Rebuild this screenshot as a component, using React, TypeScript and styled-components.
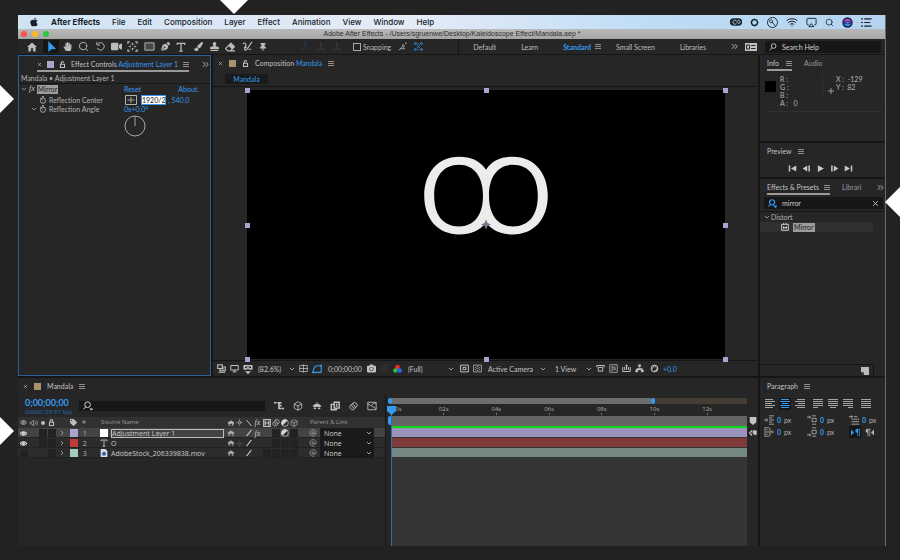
import React from "react";
import styled, { createGlobalStyle, css } from "styled-components";
import {
  FaApple,
  FaCamera,
  FaEraser,
  FaHandPaper,
  FaPaintBrush,
  FaPenNib,
  FaStamp,
  FaTag,
  FaThumbtack,
  FaVideo,
} from "react-icons/fa";
import { Airplay, Box, Search, Wifi } from "lucide-react";

const blue = "#359af0";
const panel = "#262626";
const line = "#161616";
const text = "#b2b2b2";
const ui = '"Lato", "Open Sans", sans-serif';
const wide = '"Open Sans", "Noto Sans", sans-serif';

const Global = createGlobalStyle`
  *, *::before, *::after { box-sizing: border-box; }
  body { margin: 0; background: #222222; }
  button, input, select { font: inherit; color: inherit; margin: 0; padding: 0; border: 0; background: none; outline: 0; }
  svg { display: block; flex: none; }
`;

/* ---------- icons ---------- */

type GlyphProps = { d: string; size?: number; fill?: string; sw?: number; color?: string };

const Glyph = ({ d, size = 10, fill = "none", sw = 1, color = "currentColor" }: GlyphProps) => (
  <svg width={size} height={size} viewBox="0 0 12 12" fill={fill} stroke={color} strokeWidth={sw} aria-hidden="true">
    <path d={d} />
  </svg>
);

const Solid = ({ d, size = 10, color = "currentColor" }: GlyphProps) => (
  <svg width={size} height={size} viewBox="0 0 12 12" fill={color} fillRule="evenodd" aria-hidden="true">
    <path d={d} />
  </svg>
);

const shapes = {
  chevron: "M2 4l4 4 4-4",
  chevronRight: "M4 2l4 4-4 4",
  double: "M1.5 2l4 4-4 4M6.5 2l4 4-4 4",
  cross: "M2 2l8 8M10 2l-8 8",
  home: "M6 0.5L0 6h1.7v5.5h3V7.5h2.6v4h3V6H12z",
  cursor: "M2.5 0l8.5 8.8-5 0.2-3.5 3z",
  rotate: "M2.4 7.5a4 4 0 1 0 0.4-4M2 1v3.4h3.4",
  pan: "M1 3V1h2M9 1h2v2M11 9v2H9M3 11H1V9M6 2v2M6 8v2M2 6h2M8 6h2M6 6h0.1M4 4l0.5 0.5M8 4l-0.5 0.5M4 8l0.5-0.5M8 8l-0.5-0.5",
  rect: "M1 2h10v8H1z",
  type: "M1.5 3.5V1.5h9v2M6 1.5v9.5M4 11h4",
  roto: "M1 3c2-2 4 0 3 3-1 3-2 4 0 4 2 0 2-3 7-9M2 7h3M7 9h3",
  axes: "M6 1v6M6 7l-5 3.5M6 7l5 3.5M4.8 2.5L6 0.5l1.2 2",
  snapDiagonal: "M1 11l6-6M5 4h3v3M3 9h6l-2-2M10 1h1v1h-1z",
  snapNodes: "M1 1h2v2H1zM9 1h2v2H9zM1 9h2v2H1zM9 9h2v2H9zM4 4l4 4M8 4L4 8M5 2h2M5 10h2",
  lock: "M2.5 5.5h7v5.5h-7zM4 5.5V3a2 2 0 0 1 4 0",
  padlock: "M2.5 5.5h7v5.5h-7zM4 5.5V3a2 2 0 0 1 4 0v2.5",
  watch: "M6 3a4 4 0 1 1 0 8 4 4 0 1 1 0-8M6 3V1M4.5 1h3M6 7L3.8 4.8M1.8 2.8l1.2 1",
  zoomDrop: "M5.5 1a3.4 3.4 0 1 1 0 6.8 3.4 3.4 0 1 1 0-6.8M3.2 7L0.8 10M8.5 9.5h3l-1.5 1.5z",
  monitor: "M1 2h10v6H1zM3.5 10.5h5M6 8v2",
  stack: "M1 1h6v5H1zM4 6v3h7V4H7M6 6.5h3M2 11h9",
  goggles: "M1.5 2h9v4H8L6 4.5 4 6H1.5zM4.5 9.5h3L6 11z",
  cropGrid: "M1 2h10v8H1zM6 0.5v11M0 6h12",
  mask: "M1 10h10V2H7C3 2 2 5 1 10zM0.5 9.5h1v1h-1zM10.5 1.5h1v1h-1z",
  region: "M0.8 1.5h10.4v9H0.8zM4 4.5h4v3H4z",
  checker: "M0.8 1.5h10.4v9H0.8zM3 4l2 2-2 2M9 4L7 6l2 2M5 3.5h2M5 8.5h2",
  align: "M1 2h10M3 4.5h6v5H3zM1 2v2.5M11 2v2.5",
  fast: "M1 1h10v10H1zM4 3v6l2-2h3zM8 3v2",
  chart: "M1 4v6h10V4M3.5 4v4M6 2v6M8.5 4v4M4.5 3L6 1l1.5 2",
  flow: "M4.5 1h3v2.5h-3zM0.8 8h3v2.5h-3zM8.2 8h3v2.5h-3zM6 3.5v2.5M2.3 8V6h7.4v2",
  aperture: "M6 1.5a4.5 4.5 0 1 1 0 9 4.5 4.5 0 1 1 0-9M6 1.5l2.5 3M10.2 4.5L8.5 8M9.5 9H5.5M2 8l1.5-3.5M3.5 2.5L6 4.5",
  tree: "M0 2h3M4 2h3M7 2h2M6 2v3.5h3M6 5.5V9h3M9.5 9h2.5",
  shy: "M1.5 6.5C1.5 3 10.5 3 10.5 6.5zM6 1.5v3M2 9h3M7 9h3M3.5 6v4M8.5 6v4",
  blend: "M5 1.5h6v7H5zM5 4H1.5v6.5h6V9M7 4h2M7 6h2",
  blur: "M2 4.5l4-3.5c3-1 6 2 4.5 4.5L7 9.5C4 12.5-0.5 8 2 4.5zM4.5 3c2 0 4 2.5 3.5 4.5M3 5c1.5 0 3 2 2.5 3.5",
  graph: "M1 1.5h10v9H1zM0.5 3l10 6M6 5l2-2.5h3",
  slash: "M2.5 10.5l7-9",
  backslash: "M2 1.5l8 9",
  sun: "M6 3.8a2.2 2.2 0 1 1 0 4.4 2.2 2.2 0 1 1 0-4.4M6 0.8v1.5M6 9.7v1.5M0.8 6h1.5M9.7 6h1.5",
  spiral: "M7.8 6a1.8 1.8 0 1 1-1.8-1.8c1.5 0 2 1 2 2.5s1 1.5 2 1c2-4-1-7-4-6.7C2.5 1.3 1 4 1.5 7c0.5 3 4 4.8 7 3.5",
  eye: "M0.5 6C3 2 9 2 11.5 6 9 10 3 10 0.5 6zM6 4.6a1.4 1.4 0 1 1 0 2.8 1.4 1.4 0 1 1 0-2.8",
  speaker: "M0.5 4.5H2.5L5.5 2v8L2.5 7.5H0.5zM7.5 4c1.3 1 1.3 3 0 4M9 2c2.7 2 2.7 6 0 8",
  crosshair: "M6 0v12M0 6h12",
  pick: "M0.5 1.5h11v9h-11zM6 3v1.5M6 7.5V9M2.5 6h2M7.5 6h2M6 4.7L7.3 6 6 7.3 4.7 6z",
};

const CreativeCloud = () => (
  <svg width="12" height="10" viewBox="0 0 12 10">
    <path d="M3.5 1.2h5a3.8 3.8 0 0 1 0 7.6h-5a3.8 3.8 0 0 1 0-7.6z" fill="#1c2830" />
    <path d="M6.5 6.5a2 2 0 1 1-0.5-3l2.5 3a1.6 1.6 0 1 0-1-2.8" fill="none" stroke="#bcd9f0" strokeWidth="0.8" />
  </svg>
);

const Siri = () => (
  <svg width="11" height="11" viewBox="0 0 12 12">
    <circle cx="6" cy="6" r="5.7" fill="#20245a" />
    <path d="M1.5 6C4 1 8 1 10.5 6 8 3.5 4 3.5 1.5 6z" fill="#e052c4" />
    <path d="M1.5 6.5C4 11 8 11 10.5 6.5 8 8.5 4 8.5 1.5 6.5z" fill="#35a5ee" />
    <path d="M3 6c2-2 4-2 6 0-2 2-4 2-6 0z" fill="#5c62e6" />
  </svg>
);

const Channels = () => (
  <svg width="9" height="10" viewBox="0 0 12 12">
    <circle cx="6" cy="3.2" r="3" fill="#f0302c" />
    <circle cx="3.2" cy="8" r="3" fill="#20c440" />
    <circle cx="8.8" cy="8" r="3" fill="#2f62f2" />
  </svg>
);

const HalfDisc = () => (
  <svg width="8" height="8" viewBox="0 0 12 12">
    <circle cx="6" cy="6" r="5" fill="#2a2a2a" stroke="#d6d6d6" />
    <path d="M9.8 2.2a5.3 5.3 0 0 0-7.6 7.6z" fill="#d6d6d6" />
  </svg>
);

/* ---------- frame ---------- */

const Page = styled.div`
  position: relative;
  display: flex;
  flex-direction: column;
  min-height: 100vh;
  padding: 15px 14px 14px 18px;
  background: #222222;
  color: ${text};
  font: 7px/10px ${ui};
  overflow: hidden;
`;

const Pointer = styled.i<{ $side: "top" | "left" | "right"; $at: number }>`
  position: absolute;
  background: #ffffff;
  ${({ $side, $at }) =>
    $side === "top"
      ? css`top: 0; left: ${$at}px; width: 28px; height: 14px; clip-path: polygon(0 0, 100% 0, 50% 100%);`
      : $side === "left"
      ? css`left: 0; top: ${$at}px; width: 14px; height: 28px; clip-path: polygon(0 0, 100% 50%, 0 100%);`
      : css`right: 0; top: ${$at}px; width: 15px; height: 30px; z-index: 1; clip-path: polygon(100% 0, 0 50%, 100% 100%);`}
`;

const Window = styled.div`
  flex: 1;
  display: flex;
  flex-direction: column;
  background: ${panel};
  border-right: 1px solid #6c6c6c;
`;

const MenuBar = styled.header`
  display: flex;
  align-items: center;
  height: 14px;
  padding: 0 13px 0 11px;
  gap: 12px;
  background: linear-gradient(90deg, #cfe3f3, #e6ebf6 45%, #bcdcf6 75%, #b5d3f0);
  color: #17202a;
  font: 8px/14px "Inter", sans-serif;
`;
const MenuItem = styled.button<{ $bold?: boolean }>`
  font-weight: ${(p) => (p.$bold ? 700 : 500)};
`;
const Status = styled.div`
  display: flex;
  align-items: center;
  gap: 8px;
  margin-left: auto;
`;

const TitleBar = styled.div`
  display: flex;
  align-items: center;
  height: 10px;
  padding: 0 3px;
  gap: 5px;
  background: linear-gradient(#b9b9b9, #a5a5a5);
  color: #2e2e2e;
  font: 7px/10px "Liberation Sans", sans-serif;
`;
const Light = styled.button<{ $c: string }>`
  width: 6px;
  height: 6px;
  border-radius: 50%;
  background: ${(p) => p.$c};
`;
const Title = styled.h1`
  flex: 1;
  margin: 0;
  padding-right: 32px;
  font: inherit;
  text-align: center;
`;

const ToolBar = styled.div`
  display: flex;
  align-items: center;
  height: 16px;
  padding: 0 4px 0 6px;
  border-bottom: 1px solid ${line};
  color: #bcbcbc;
`;
const ToolGroup = styled.div<{ $gap?: number; $dim?: boolean }>`
  display: flex;
  align-items: center;
  margin-right: ${(p) => p.$gap ?? 1}px;
  ${(p) => p.$dim && "color: #3c444c;"}
`;
const Tool = styled.button<{ $on?: boolean; $tone?: string }>`
  display: grid;
  place-items: center;
  width: 16px;
  height: 13px;
  color: ${(p) => p.$tone ?? "inherit"};
  background: ${(p) => (p.$on ? "#151515" : "none")};
`;
const Snap = styled.label`
  display: flex;
  align-items: center;
  gap: 2px;
  margin-right: 3px;
`;
const Check = styled.input`
  appearance: none;
  width: 8px;
  height: 8px;
  border: 1px solid #a8a8a8;
`;
const Workspaces = styled.nav`
  display: flex;
  align-items: center;
  gap: 25px;
  height: 15px;
  margin-left: auto;
  margin-right: 7px;
  padding-left: 14px;
  border-left: 1px solid ${line};
`;
const Space = styled.button<{ $on?: boolean }>`
  display: flex;
  align-items: center;
  gap: 4px;
  ${(p) => p.$on && `color: ${blue}; font-weight: 700; margin-right: -10px;`}
`;
const Card = styled.button`
  margin-right: 8px;
`;
const Field = styled.label<{ $w?: number }>`
  display: flex;
  align-items: center;
  gap: 5px;
  height: 12px;
  padding: 0 4px;
  background: #171717;
  color: #d0d0d0;
  ${(p) => p.$w && `width: ${p.$w}px;`}
`;
const FieldInput = styled.input`
  flex: 1;
  min-width: 0;
  &::placeholder { color: #d0d0d0; opacity: 1; }
`;

/* ---------- panels ---------- */

const Body = styled.main`
  flex: 1;
  display: grid;
  grid-template-columns: minmax(0, 1fr) 125px;
  column-gap: 2px;
  background: ${line};
`;
const Column = styled.div`
  display: flex;
  flex-direction: column;
  gap: 2px;
  min-width: 0;
`;
const Upper = styled.div`
  flex: 321 1 0;
  display: grid;
  grid-template-columns: 193px minmax(0, 1fr);
  column-gap: 2px;
`;
const Panel = styled.section<{ $active?: boolean; $grow?: number; $h?: number }>`
  display: flex;
  flex-direction: column;
  min-width: 0;
  background: ${panel};
  ${(p) => p.$active && "border: 1px solid #29609c;"}
  ${(p) => p.$grow && `flex: ${p.$grow} 1 0;`}
  ${(p) => p.$h && `height: ${p.$h}px;`}
`;
const TabRow = styled.div<{ $left?: number }>`
  display: flex;
  align-items: flex-start;
  height: 17px;
  padding: 2px 1px 0 ${(p) => p.$left ?? 7}px;
`;
const Tab = styled.div<{ $on?: boolean; $gap?: number; $dim?: boolean }>`
  display: flex;
  align-items: center;
  gap: ${(p) => p.$gap ?? 6}px;
  height: 14px;
  color: ${(p) => (p.$dim ? "#989898" : "#c2c2c2")};
  border-bottom: 2px solid ${(p) => (p.$on ? "#9a9a9a" : "transparent")};
  b { color: ${blue}; font-weight: 400; }
`;
const Swatch = styled.i<{ $c: string; $s?: number }>`
  flex: none;
  display: block;
  width: ${(p) => p.$s ?? 7}px;
  height: ${(p) => p.$s ?? 7}px;
  background: ${(p) => p.$c};
`;
const Push = styled.span`
  margin-left: auto;
  margin-top: 3px;
`;

const Crumb = styled.div`
  height: 11px;
  padding: 0 2px;
  border-bottom: 1px solid ${line};
`;
const Prop = styled.div`
  display: grid;
  grid-template-columns: 105px 1fr;
  align-items: center;
  height: 10px;
`;
const PropName = styled.div<{ $in?: number }>`
  display: flex;
  align-items: center;
  gap: 2px;
  padding-left: ${(p) => p.$in ?? 2}px;
  i { font: italic 8px/10px "Liberation Serif", serif; color: #c8c8c8; }
`;
const Mark = styled.span`
  padding: 0 1px;
  background: #9c9c9c;
  color: #262626;
  line-height: 9px;
`;
const PropValue = styled.div`
  display: flex;
  align-items: center;
  color: ${blue};
`;
const Link = styled.button<{ $end?: boolean }>`
  color: ${blue};
  ${(p) => p.$end && "margin-left: auto; margin-right: 11px;"}
`;
const Edit = styled.input`
  width: 25px;
  height: 10px;
  margin: 0 2px 0 3px;
  border: 1px solid ${blue};
  background: #ffffff;
  color: #222222;
`;
const Dial = styled.svg`
  margin: 1px 0 0 105px;
`;

const CompTabs = styled.div`
  height: 15px;
  padding: 2px 0 0 12px;
  border-bottom: 1px solid ${line};
`;
const CompTab = styled.button`
  width: 43px;
  height: 10px;
  background: #1a1a1a;
  color: ${blue};
  line-height: 10px;
`;
const Stage = styled.div`
  flex: 1;
  position: relative;
  margin: 3px 33px 1px 34px;
  background: #000000;
`;
const Art = styled.svg`
  position: absolute;
  inset: 0;
  width: 100%;
  height: 100%;
`;
const Handle = styled.i<{ $x: number; $y: number }>`
  position: absolute;
  left: ${(p) => p.$x}%;
  top: ${(p) => p.$y}%;
  width: 5px;
  height: 5px;
  margin: -2px;
  background: #aaa3cf;
`;
const ViewBar = styled.div`
  display: flex;
  align-items: center;
  height: 16px;
  padding: 0 0 0 2px;
  border-top: 1px solid ${line};
  color: #c2c2c2;
`;
const ViewIcon = styled.button<{ $tone?: string }>`
  display: grid;
  place-items: center;
  width: 13px;
  height: 12px;
  color: ${(p) => p.$tone ?? "inherit"};
`;
const Picker = styled.span<{ $w: number }>`
  display: flex;
  align-items: center;
  width: ${(p) => p.$w}px;
  select { flex: 1; min-width: 0; appearance: none; }
`;
const Plain = styled.span<{ $w: number; $tone?: string }>`
  width: ${(p) => p.$w}px;
  color: ${(p) => p.$tone ?? "inherit"};
`;

/* ---------- timeline ---------- */

const Timeline = styled(Panel)`
  flex: 168 1 0;
`;
const TimeGrid = styled.div`
  flex: 1;
  display: grid;
  grid-template-columns: 368px minmax(0, 1fr) 11px;
`;
const LayerSide = styled.div`
  border-right: 1px solid ${line};
`;
const TimeHead = styled.div`
  display: flex;
  align-items: center;
  height: 22px;
  padding: 0 8px 0 7px;
`;
const Clock = styled.div`
  width: 54px;
  color: ${blue};
  font: 700 9px/11px ${ui};
`;
const Frames = styled.div`
  color: #2369ab;
  font: 6px/8px ${ui};
`;
const TimeSearch = styled(Field)`
  width: 186px;
  height: 10px;
  margin-right: 9px;
`;
const TimeTools = styled.div`
  flex: 1;
  display: flex;
  justify-content: space-between;
  align-items: center;
  color: #c4c4c4;
`;
const Layers = styled.table`
  width: 100%;
  border-collapse: collapse;
  table-layout: fixed;
  font: 7px/9px ${wide};
  th, td { padding: 0; height: 10px; font-weight: 400; text-align: left; }
  th { height: 11px; background: #313131; color: #9a9a9a; font-size: 6px; }
  th svg { color: #bdbdbd; }
  svg, i { margin: 0 auto; }
`;
const LayerRow = styled.tr<{ $on?: boolean }>`
  background: ${(p) => (p.$on ? "#434343" : "#2c2c2c")};
  td { box-shadow: inset 0 -1px #222222; }
`;
const Well = styled.i<{ $show?: boolean }>`
  display: block;
  width: 8px;
  height: 8px;
  background: ${(p) => (p.$show === false ? "none" : "#222222")};
`;
const Name = styled.div<{ $on?: boolean }>`
  display: flex;
  align-items: center;
  gap: 3px;
  padding-left: 2px;
  height: 10px;
  && svg { margin: 0; }
  span { flex: 1; height: 9px; line-height: 9px; margin-right: 2px; color: #c8c8c8; ${(p) => p.$on && "border: 1px solid #bcbcbc; line-height: 7px;"} }
`;
const Parent = styled.div`
  display: flex;
  align-items: center;
  padding-left: 11px;
  gap: 3px;
  && svg { margin: 0; }
  label { display: flex; align-items: center; width: 54px; height: 10px; padding: 0 2px 0 4px; background: #1a1a1a; color: #cfcfcf; }
  select { flex: 1; min-width: 0; appearance: none; line-height: 9px; }
`;
const ParentHead = styled.th`
  && { padding-left: 12px; }
`;
const Fx = styled.i`
  display: block;
  text-align: center;
  font: italic 8px/9px "Liberation Serif", serif;
  color: #cdcdcd;
`;

const TrackSide = styled.div`
  position: relative;
  display: flex;
  flex-direction: column;
  margin-left: 5px;
`;
const Navigator = styled.div`
  height: 6px;
  margin-top: 3px;
  background: linear-gradient(90deg, #6d6d6d 73%, #433d34 73%);
`;
const NavEnd = styled.i<{ $x: string; $y: number; $h: number }>`
  position: absolute;
  left: ${(p) => p.$x};
  top: ${(p) => p.$y}px;
  width: 4px;
  height: ${(p) => p.$h}px;
  border-radius: 2px;
  background: ${blue};
`;
const Ruler = styled.div`
  display: flex;
  height: 12px;
  padding-top: 1px;
  overflow: hidden;
  font: 6px/8px ${wide};
  span {
    flex: none;
    width: 14.8%;
    height: 10px;
    text-align: center;
    background: linear-gradient(#777777, #777777) 50% 100% / 1px 2px no-repeat;
  }
  span:first-child { margin-left: -7.4%; padding-left: 10px; }
`;
const WorkArea = styled.div`
  height: 10px;
  background: #646464;
`;
const Cached = styled.div`
  height: 2px;
  background: #09d816;
`;
const Bar = styled.div<{ $c: string }>`
  height: 10px;
  border-bottom: 1px solid #333333;
  background: ${(p) => p.$c};
`;
const Empty = styled.div`
  flex: 1;
  background: #353535;
`;
const Playhead = styled.div`
  position: absolute;
  left: 0;
  top: 20px;
  bottom: 0;
  width: 1px;
  background: #2d6fb4;
  svg { margin: -9px 0 0 -4px; }
`;
const Gutter = styled.div`
  padding: 22px 0 0 2px;
  color: #c2c2c2;
  svg { margin-bottom: 4px; }
`;

/* ---------- right column ---------- */

const InfoGrid = styled.div`
  display: grid;
  grid-template-columns: 15px 42px 1fr;
  margin: 3px 4px 0 5px;
  padding-bottom: 4px;
  border-bottom: 1px solid #303030;
  align-items: start;
  line-height: 8px;
  white-space: pre;
`;
const Sample = styled.i`
  width: 11px;
  height: 11px;
  margin-top: 6px;
  background: #000000;
`;
const Cell = styled.div<{ $rule?: boolean }>`
  display: flex;
  align-items: center;
  ${(p) => p.$rule && "border-left: 1px solid #303030; padding-left: 5px; gap: 2px; height: 24px; svg { margin-top: 7px; } p { margin: 0 0 8px; }"}
`;
const Transport = styled.div`
  display: flex;
  gap: 4px;
  margin-top: 2px;
  padding-left: 27px;
  color: #c8c8c8;
`;
const Small = styled.button<{ $w?: number; $on?: boolean; $tone?: string }>`
  display: grid;
  place-items: center;
  width: ${(p) => p.$w ?? 10}px;
  height: 12px;
  color: ${(p) => p.$tone ?? "inherit"};
  ${(p) => p.$on && `background: #151515; color: ${blue};`}
`;
const FxField = styled(Field)`
  margin: 1px 2px 2px 4px;
  height: 12px;
`;
const Tree = styled.div<{ $in?: number; $on?: boolean }>`
  display: flex;
  align-items: center;
  gap: 1px;
  height: 10px;
  margin-right: 12px;
  padding-left: ${(p) => p.$in ?? 4}px;
  background: ${(p) => (p.$on ? "#303030" : "none")};
`;
const TreeBox = styled.div`
  flex: 1;
  display: flex;
  flex-direction: column;
  border-top: 1px solid ${line};
`;
const TreeFoot = styled.div`
  display: flex;
  justify-content: flex-end;
  height: 12px;
  margin-top: auto;
  margin-right: 11px;
  padding: 2px 4px;
  border: solid ${line};
  border-width: 1px 1px 0 0;
`;
const AlignRow = styled.div`
  display: flex;
  align-items: center;
  gap: 3px;
  margin-top: 3px;
  padding: 0 11px 0 4px;
  color: #a4a4a4;
  button:nth-child(3) { margin-right: 3px; }
  button:last-child { margin-left: 3px; }
`;
const Indents = styled.div`
  display: grid;
  grid-template-columns: 43px 42px 1fr;
  grid-auto-rows: 12px;
  margin: 4px 0 0 4px;
  align-items: center;
`;
const Indent = styled.label`
  display: flex;
  align-items: center;
  gap: 3px;
  input { width: 5px; color: ${blue}; font-weight: 700; }
  span { display: flex; gap: 2px; }
`;
const Direction = styled.div`
  display: flex;
  gap: 2px;
`;

const MenuIcon = () => (
  <svg width="6" height="5" viewBox="0 0 6 5" fill="#8e8e8e" shapeRendering="crispEdges" aria-hidden="true">
    <path d="M0 0h6v1H0zM0 2h6v1H0zM0 4h6v1H0z" />
  </svg>
);
const Cross = ({ size = 5 }: { size?: number }) => <Glyph d={shapes.cross} size={size} sw={1.5} />;
const Chevron = ({ right }: { right?: boolean }) => (
  <Glyph d={right ? shapes.chevronRight : shapes.chevron} size={6} sw={1.5} />
);

const paragraph = [
  "M1 1.5h8M1 3.5h10M1 5.5h7M1 7.5h10M1 9.5h8",
  "M2 1.5h8M1 3.5h10M3 5.5h6M1 7.5h10M2 9.5h8",
  "M3 1.5h8M1 3.5h10M4 5.5h7M1 7.5h10M3 9.5h8",
  "M1 1.5h10M1 3.5h10M1 5.5h10M1 7.5h10M1 9.5h5",
  "M1 1.5h10M1 3.5h10M1 5.5h10M1 7.5h10M3 9.5h6",
  "M1 1.5h10M1 3.5h10M1 5.5h10M1 7.5h10M6 9.5h5",
  "M1 1.5h10M1 3.5h10M1 5.5h10M1 7.5h10M1 9.5h10",
];
const indentLeft = "M0 6h4M2.5 4L4.5 6 2.5 8M6 1h6M6 3.5h4M6 6h6M6 8.5h4M6 11h6";
const indentRight = "M12 6H9M10 4L8 6l2 2M0 1h6M0 3.5h4M0 6h6M0 8.5h4M0 11h6M7 1v10";
const spaceBefore = "M0 2.5h4M2.5 1L4.5 2.5 2.5 4M6 1h5M6 4h5v4H6zM6 11h5";
const spaceAfter = "M0 9.5h4M2.5 8L4.5 9.5 2.5 11M6 1h5M6 4h5v4H6zM6 11h5";
const firstLine = "M0 2h4M2.5 0.5L4.5 2 2.5 3.5M6 2h4M3 5h9M3 8h9M3 11h9";

const IndentInput = ({ label, d }: { label: string; d: string }) => (
  <Indent>
    <Glyph d={d} size={10} />
    <span>
      <input aria-label={label} defaultValue="0" /> px
    </span>
  </Indent>
);

const layers = [
  { n: 1, name: "Adjustment Layer 1", c: "#aaa5cf", on: true },
  { n: 2, name: "O", c: "#bf3a3a", on: false },
  { n: 3, name: "AdobeStock_206339838.mov", c: "#a5cbc3", on: false },
];

const Menus = () => (
  <MenuBar>
    <FaApple size={10} />
    {["After Effects", "File", "Edit", "Composition", "Layer", "Effect", "Animation", "View", "Window", "Help"].map((m, i) => (
      <MenuItem key={m} $bold={i === 0}>{m}</MenuItem>
    ))}
    <Status>
      <CreativeCloud />
      <Glyph d="M6 1.8l3 1.2 1.2 3L9 9 6 10.2 3 9 1.8 6 3 3z" size={9} sw={2} />
      <Glyph d="M6 0.5a5.5 5.5 0 1 1 0 11 5.5 5.5 0 1 1 0-11M4.5 3a1.6 1.6 0 1 1-0.1 0M5.5 5.5l3.5 4" size={11} />
      <Wifi size={12} />
      <Airplay size={11} />
      <Search size={9} />
      <Siri />
      <Glyph d="M0 2h2M3.5 2h8M0 6h2M3.5 6h6.5M0 10h2M3.5 10h8" size={11} sw={1.2} />
    </Status>
  </MenuBar>
);

const Tools = () => (
  <ToolBar>
    <ToolGroup $gap={3}><Tool aria-label="Home"><Solid d={shapes.home} size={10} /></Tool></ToolGroup>
    <ToolGroup>
      <Tool $on $tone={blue} aria-label="Selection"><Solid d={shapes.cursor} size={11} /></Tool>
      <Tool aria-label="Hand"><FaHandPaper size={9} /></Tool>
      <Tool aria-label="Zoom"><Search size={11} /></Tool>
    </ToolGroup>
    <ToolGroup>
      <Tool aria-label="Rotate"><Glyph d={shapes.rotate} size={11} /></Tool>
      <Tool aria-label="Camera"><FaVideo size={11} /></Tool>
      <Tool aria-label="Pan behind"><Glyph d={shapes.pan} size={11} sw={1.3} /></Tool>
    </ToolGroup>
    <ToolGroup>
      <Tool aria-label="Rectangle"><Glyph d={shapes.rect} size={11} fill="#484848" /></Tool>
      <Tool aria-label="Pen"><FaPenNib size={9} /></Tool>
      <Tool aria-label="Type"><Glyph d={shapes.type} size={10} sw={1.5} /></Tool>
    </ToolGroup>
    <ToolGroup>
      <Tool aria-label="Brush"><FaPaintBrush size={9} /></Tool>
      <Tool aria-label="Clone stamp"><FaStamp size={9} /></Tool>
      <Tool aria-label="Eraser"><FaEraser size={10} /></Tool>
    </ToolGroup>
    <ToolGroup $gap={26}>
      <Tool aria-label="Roto brush"><Glyph d={shapes.roto} size={11} sw={1.3} /></Tool>
      <Tool aria-label="Puppet pin"><FaThumbtack size={8} /></Tool>
    </ToolGroup>
    <ToolGroup $dim $gap={8}>
      <Tool $tone="#1d3f60" aria-label="Local axis"><Glyph d={shapes.axes} /></Tool>
      <Tool aria-label="World axis"><Glyph d={shapes.axes} /></Tool>
      <Tool aria-label="View axis"><Glyph d={shapes.axes} /></Tool>
    </ToolGroup>
    <Snap><Check type="checkbox" /> Snapping</Snap>
    <Tool aria-label="Snap edges"><Glyph d={shapes.snapDiagonal} size={9} /></Tool>
    <Tool $tone={blue} aria-label="Snap features"><Glyph d={shapes.snapNodes} size={9} /></Tool>
    <Workspaces>
      <Space>Default</Space>
      <Space>Learn</Space>
      <Space $on>Standard <MenuIcon /></Space>
      <Space>Small Screen</Space>
      <Space>Libraries</Space>
      <Glyph d={shapes.double} size={7} sw={1.7} />
    </Workspaces>
    <Card aria-label="Workspace card">
      <svg width="12" height="8" viewBox="0 0 12 8">
        <path d="M0 0h12v8H0z" fill="#c2c2c2" />
        <path d="M1.5 2h3v4h-3zM6 2.5h4.5M6 5.5h4.5" fill="none" stroke="#262626" />
      </svg>
    </Card>
    <Field $w={116}>
      <Glyph d="M7 1a3.5 3.5 0 1 1 0 7 3.5 3.5 0 1 1 0-7M4.5 7L1 11" size={8} sw={1.3} />
      <FieldInput aria-label="Search Help" placeholder="Search Help" />
    </Field>
  </ToolBar>
);

const EffectControls = () => (
  <Panel $active>
    <TabRow $left={18}>
      <Tab $on $gap={5}>
        <Cross /> <Swatch $c="#aaa5cf" /> <Glyph d={shapes.lock} size={7} sw={1.8} />
        <span>Effect Controls <b>Adjustment Layer 1</b></span> <MenuIcon />
      </Tab>
      <Push><Glyph d={shapes.double} size={7} sw={1.7} /></Push>
    </TabRow>
    <Crumb>Mandala • Adjustment Layer 1</Crumb>
    <Prop>
      <PropName><Chevron /> <i>fx</i> <Mark>Mirror</Mark></PropName>
      <PropValue><Link>Reset</Link><Link $end>About.</Link></PropValue>
    </Prop>
    <Prop>
      <PropName $in={20}><Glyph d={shapes.watch} size={8} sw={1.3} /> Reflection Center</PropName>
      <PropValue>
        <Small $w={14} $tone={text} aria-label="Pick center"><Glyph d={shapes.pick} size={12} /></Small>
        <Edit aria-label="Reflection Center X" defaultValue="1920/2" />, 540.0
      </PropValue>
    </Prop>
    <Prop>
      <PropName $in={12}><Chevron /> <Glyph d={shapes.watch} size={8} sw={1.3} /> Reflection Angle</PropName>
      <PropValue>0x+0.0°</PropValue>
    </Prop>
    <Dial width="22" height="22" viewBox="0 0 22 22" fill="none" stroke="#a8a8a8">
      <circle cx="11" cy="11" r="10" />
      <path d="M11 1v10" />
    </Dial>
  </Panel>
);

const handles: [number, number][] = [[0, 0], [50, 0], [100, 0], [0, 50], [100, 50], [0, 100], [50, 100], [100, 100]];

const Composition = () => (
  <Panel>
    <TabRow $left={5}>
      <Tab>
        <Cross /> <Swatch $c="#a8946c" /> <Glyph d={shapes.lock} size={7} sw={1.8} />
        <span>Composition <b>Mandala</b></span> <MenuIcon />
      </Tab>
    </TabRow>
    <CompTabs><CompTab>Mandala</CompTab></CompTabs>
    <Stage>
      <Art viewBox="0 0 478 270">
        <path
          fill="#ececec"
          fillRule="evenodd"
          d="M239 80C233 71 224 67 212 67C190 67 177 84 177 106C177 130 191 145 212 145C224 145 233 141 239 133C245 141 254 145 266 145C287 145 301 130 301 106C301 84 288 67 266 67C254 67 245 71 239 80ZM212 75C227 75 236 87 236 106C236 126 227 137 212 137C196 137 187 126 187 106C187 87 196 75 212 75ZM266 75C282 75 291 87 291 106C291 126 282 137 266 137C251 137 242 126 242 106C242 87 251 75 266 75Z"
        />
        <path d="M239 130l1.5 3.5 3.5 1.5-3.5 1.5-1.5 3.5-1.5-3.5-3.5-1.5 3.5-1.5z" fill="#777792" />
      </Art>
      {handles.map(([x, y]) => <Handle key={`${x}-${y}`} $x={x} $y={y} />)}
    </Stage>
    <ViewBar>
      <ViewIcon aria-label="Always preview"><Glyph d={shapes.stack} size={9} sw={1.5} /></ViewIcon>
      <ViewIcon aria-label="Main viewer"><Glyph d={shapes.monitor} size={9} sw={1.3} /></ViewIcon>
      <ViewIcon aria-label="VR"><Glyph d={shapes.goggles} sw={1.8} /></ViewIcon>
      <Plain $w={4} />
      <Picker $w={37}><select aria-label="Zoom"><option>(82.6%)</option></select><Chevron /></Picker>
      <Plain $w={2} />
      <ViewIcon aria-label="Grid"><Glyph d={shapes.cropGrid} size={9} /></ViewIcon>
      <ViewIcon $tone={blue} aria-label="Mask"><Glyph d={shapes.mask} sw={1.3} /></ViewIcon>
      <Plain $w={5} />
      <Plain $w={37}>0;00;00;00</Plain>
      <ViewIcon aria-label="Snapshot"><FaCamera size={9} /></ViewIcon>
      <ViewIcon $tone="#3a3a3a" aria-label="Show snapshot"><Glyph d={shapes.blur} size={9} /></ViewIcon>
      <ViewIcon aria-label="Channels"><Channels /></ViewIcon>
      <Plain $w={4} />
      <Picker $w={46}><select aria-label="Resolution"><option>(Full)</option></select><Chevron /></Picker>
      <Plain $w={4} />
      <ViewIcon aria-label="Region"><Glyph d={shapes.region} size={9} sw={1.3} /></ViewIcon>
      <ViewIcon aria-label="Transparency"><Glyph d={shapes.checker} size={9} /></ViewIcon>
      <Plain $w={4} />
      <Picker $w={58}><select aria-label="Camera view"><option>Active Camera</option></select><Chevron /></Picker>
      <Plain $w={9} />
      <Picker $w={37}><select aria-label="Layout"><option>1 View</option></select><Chevron /></Picker>
      <Plain $w={2} />
      <ViewIcon aria-label="Pixel aspect"><Glyph d={shapes.align} size={9} sw={1.3} /></ViewIcon>
      <ViewIcon aria-label="Fast previews"><Glyph d={shapes.fast} size={9} /></ViewIcon>
      <ViewIcon aria-label="Timeline"><Glyph d={shapes.chart} size={9} sw={1.3} /></ViewIcon>
      <ViewIcon aria-label="Flowchart"><Glyph d={shapes.flow} size={9} fill="currentColor" sw={0.7} /></ViewIcon>
      <Plain $w={2} />
      <ViewIcon aria-label="Exposure"><Glyph d={shapes.aperture} size={9} sw={1.3} /></ViewIcon>
      <Plain $w={2} />
      <Plain $w={20} $tone={blue}>+0.0</Plain>
    </ViewBar>
  </Panel>
);

const columnWidths = [11, 9, 9, 9, 12, 11, 19, 128, 9, 9, 9, 9, 9, 9, 9, 9];

const TimelinePanel = () => (
  <Timeline>
    <TabRow $left={5}>
      <Tab><Cross /> <Swatch $c="#a8946c" /> <span>Mandala</span> <MenuIcon /></Tab>
    </TabRow>
    <TimeGrid>
      <LayerSide>
        <TimeHead>
          <div>
            <Clock>0;00;00;00</Clock>
            <Frames>00000 (29.97 fps)</Frames>
          </div>
          <TimeSearch><Glyph d={shapes.zoomDrop} sw={1.2} /><FieldInput aria-label="Search layers" /></TimeSearch>
          <TimeTools>
            <Glyph d={shapes.tree} sw={1.9} />
            <Box size={10} />
            <Glyph d={shapes.shy} fill="currentColor" />
            <Glyph d={shapes.blend} sw={1.7} />
            <Glyph d={shapes.blur} size={9} sw={1.3} />
            <Glyph d={shapes.graph} />
          </TimeTools>
        </TimeHead>
        <Layers>
          <colgroup>
            {columnWidths.map((w, i) => <col key={i} width={w} />)}
            <col />
          </colgroup>
          <thead>
            <tr>
              <th aria-label="Video"><Glyph d={shapes.eye} size={7} sw={1.6} /></th>
              <th aria-label="Audio"><Glyph d={shapes.speaker} size={8} /></th>
              <th aria-label="Solo"><Solid d="M6 3a3 3 0 1 1 0 6 3 3 0 1 1 0-6" size={8} /></th>
              <th aria-label="Lock"><Glyph d={shapes.padlock} size={7} sw={1.8} /></th>
              <th />
              <th aria-label="Label"><FaTag size={7} /></th>
              <th>&nbsp; #</th>
              <th>&nbsp; Source Name</th>
              <th aria-label="Shy"><Glyph d={shapes.shy} size={8} fill="currentColor" /></th>
              <th aria-label="Collapse"><Glyph d={shapes.sun} size={7} sw={1.5} /></th>
              <th aria-label="Quality"><Glyph d={shapes.backslash} size={8} sw={1.5} /></th>
              <th><Fx>fx</Fx></th>
              <th aria-label="Frame blend"><Glyph d="M1 1h10v10H1zM3.5 3v6M8.5 3v6M3.5 6h5" size={8} sw={1.8} /></th>
              <th aria-label="Motion blur"><Glyph d={shapes.blur} size={8} sw={1.3} /></th>
              <th aria-label="Adjustment"><HalfDisc /></th>
              <th aria-label="3D"><Box size={8} /></th>
              <ParentHead>Parent &amp; Link</ParentHead>
            </tr>
          </thead>
          <tbody>
            {layers.map((l) => (
              <LayerRow key={l.n} $on={l.on}>
                <td>{l.n < 3 ? <Glyph d={shapes.eye} size={7} sw={1.8} color="#e0e0e0" /> : <Well />}</td>
                <td><Well $show={false} /></td>
                <td><Well $show={l.n < 3} /></td>
                <td><Well /></td>
                <td><Chevron right /></td>
                <td><Swatch $c={l.c} $s={8} /></td>
                <td>&nbsp; {l.n}</td>
                <td>
                  <Name $on={l.on}>
                    {l.n === 1 && <Solid d="M0 0h12v12H0z" size={8} color="#ffffff" />}
                    {l.n === 2 && <Glyph d={shapes.type} size={8} sw={1.5} />}
                    {l.n === 3 && (
                      <svg width="8" height="8" viewBox="0 0 12 12">
                        <path d="M1 0h7l3 3v9H1z" fill="#d9dde4" />
                        <circle cx="6" cy="7" r="3" fill="#2a62b4" />
                      </svg>
                    )}
                    <span>{l.name}</span>
                  </Name>
                </td>
                <td><Glyph d={shapes.shy} size={8} fill="currentColor" /></td>
                <td>{l.n === 2 && <Glyph d={shapes.sun} size={7} color="#666666" />}</td>
                <td><Glyph d={shapes.slash} size={8} sw={1.6} color="#d8d8d8" /></td>
                <td>{l.n === 1 ? <Fx>fx</Fx> : null}</td>
                <td><Well $show={l.n === 3} /></td>
                <td><Well /></td>
                <td>{l.n === 1 ? <HalfDisc /> : <Well />}</td>
                <td><Well /></td>
                <td>
                  <Parent>
                    <Glyph d={shapes.spiral} size={8} />
                    <label>
                      <select aria-label={`Parent of ${l.name}`}><option>None</option></select>
                      <Chevron />
                    </label>
                  </Parent>
                </td>
              </LayerRow>
            ))}
          </tbody>
        </Layers>
      </LayerSide>
      <TrackSide>
        <Navigator />
        <Ruler>{[":00s", "02s", "04s", "06s", "08s", "10s", "12s"].map((t) => <span key={t}>{t}</span>)}</Ruler>
        <WorkArea />
        <Cached />
        <Bar $c="#9a94bd" />
        <Bar $c="#803a3a" />
        <Bar $c="#748783" />
        <Empty />
        <NavEnd $x="-3px" $y={3} $h={6} />
        <NavEnd $x="73%" $y={3} $h={6} />
        <NavEnd $x="-3px" $y={21} $h={9} />
        <Playhead>
          <svg width="9" height="9" viewBox="0 0 9 9"><path d="M0 0h9v5L4.5 9 0 5z" fill={blue} /></svg>
        </Playhead>
      </TrackSide>
      <Gutter>
        <Solid d="M1 0h10v8l-5 4-5-4z" size={8} />
        <Glyph d="M0 6l4-4v3M4 7v3L0 6M6 2.5h5v6H8L6 6z" size={8} fill="currentColor" />
      </Gutter>
    </TimeGrid>
  </Timeline>
);

const Side = () => (
  <Column>
    <Panel $h={86}>
      <TabRow>
        <Tab $on $gap={7}>Info <MenuIcon /></Tab>
        <Plain $w={12} />
        <Tab $dim>Audio</Tab>
      </TabRow>
      <InfoGrid>
        <Sample />
        <Cell>{"R :\nG :\nB :\nA :   0"}</Cell>
        <Cell $rule><Glyph d={shapes.crosshair} size={6} sw={1.6} /><p>{"X :  -129\nY :  82"}</p></Cell>
      </InfoGrid>
    </Panel>
    <Panel $h={34}>
      <TabRow><Tab>Preview <MenuIcon /></Tab></TabRow>
      <Transport>
        <Small aria-label="First frame"><Solid d="M1 2h2v8H1zM11 2v8L4 6z" size={9} /></Small>
        <Small aria-label="Previous frame"><Solid d="M7 2v8L1 6zM8.5 2h2v8h-2z" size={9} /></Small>
        <Small aria-label="Play"><Solid d="M2.5 1.5L10.5 6l-8 4.5z" size={9} /></Small>
        <Small aria-label="Next frame"><Solid d="M1.5 2h2v8h-2zM5 2v8l6-4z" size={9} /></Small>
        <Small aria-label="Last frame"><Solid d="M9 2h2v8H9zM1 2v8l7-4z" size={9} /></Small>
      </Transport>
    </Panel>
    <Panel $grow={197}>
      <TabRow>
        <Tab $on $gap={5}>Effects &amp; Presets <MenuIcon /></Tab>
        <Plain $w={12} />
        <Tab $dim>Librari</Tab>
        <Push><Glyph d={shapes.double} size={7} sw={1.7} /></Push>
      </TabRow>
      <FxField>
        <Glyph d={shapes.zoomDrop} size={9} sw={1.6} color={blue} />
        <FieldInput aria-label="Search effects" defaultValue="mirror" />
        <Cross size={7} />
      </FxField>
      <TreeBox>
        <Tree><Chevron /> Distort</Tree>
        <Tree $on $in={21}>
          <Glyph d="M1 2h10v9H1zM4 5v4M8 5v4M3 7h6M4 0v2M8 0v2" size={8} sw={1.5} color="#c8c8c8" />
          <Plain $w={2} />
          <Mark>Mirror</Mark>
        </Tree>
        <TreeFoot><Solid d="M0 0h12v12H5L0 7zM1.5 7.5L4.5 10.5V7.5z" size={8} color="#bdbdbd" /></TreeFoot>
      </TreeBox>
    </Panel>
    <Panel $grow={168}>
      <TabRow><Tab>Paragraph <MenuIcon /></Tab></TabRow>
      <AlignRow>
        {paragraph.map((d, i) => (
          <Small key={d} $w={12} $on={i === 1} aria-label={`Alignment ${i + 1}`}><Glyph d={d} size={12} /></Small>
        ))}
      </AlignRow>
      <Indents>
        <IndentInput label="Indent left" d={indentLeft} />
        <IndentInput label="Space before" d={spaceBefore} />
        <IndentInput label="First line" d={firstLine} />
        <IndentInput label="Indent right" d={indentRight} />
        <IndentInput label="Space after" d={spaceAfter} />
        <Direction>
          <Small $w={12} $on aria-label="Left to right"><Solid d="M0 2l4 4-4 4zM8 1h4v10h-1V2H9.5v9h-1V6.5a2.7 2.7 0 0 1 0-5.5z" size={9} /></Small>
          <Small $w={12} aria-label="Right to left"><Solid d="M12 2L8 6l4 4zM3 1h4v10H6V2H4.5v9h-1V6.5a2.7 2.7 0 0 1 0-5.5z" size={9} /></Small>
        </Direction>
      </Indents>
    </Panel>
  </Column>
);

export default function App() {
  return (
    <Page>
      <Global />
      <Pointer $side="top" $at={220} />
      <Pointer $side="left" $at={85} />
      <Pointer $side="left" $at={417} />
      <Pointer $side="right" $at={187} />
      <Window>
        <Menus />
        <TitleBar>
          <Light $c="#fc4f4b" aria-label="Close" />
          <Light $c="#fdb924" aria-label="Minimise" />
          <Light $c="#2bc840" aria-label="Zoom" />
          <Title>Adobe After Effects - /Users/sgruenwe/Desktop/Kaleidoscope Effect/Mandala.aep *</Title>
        </TitleBar>
        <Tools />
        <Body>
          <Column>
            <Upper>
              <EffectControls />
              <Composition />
            </Upper>
            <TimelinePanel />
          </Column>
          <Side />
        </Body>
      </Window>
    </Page>
  );
}
